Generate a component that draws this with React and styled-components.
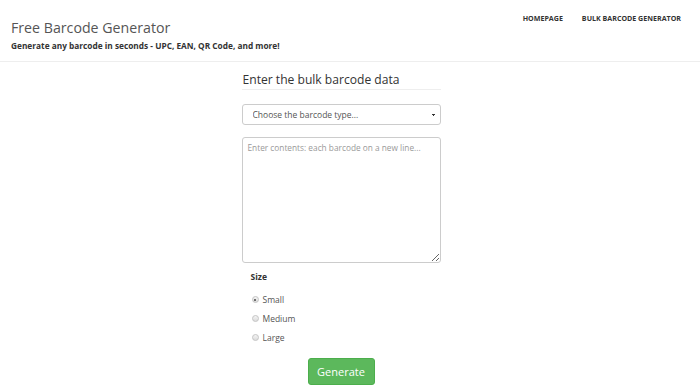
import styled, { createGlobalStyle } from 'styled-components';

const GlobalStyle = createGlobalStyle`
  body {
    margin: 0;
    font-family: "Open Sans", sans-serif;
    background: #fff;
    color: #333;
  }
`;

const App = () => {
  return (
    <>
      <GlobalStyle />
      <Header>
        <Brand>
          <Title>Free Barcode Generator</Title>
          <Tagline>Generate any barcode in seconds - UPC, EAN, QR Code, and more!</Tagline>
        </Brand>
        <Nav>
          <NavLink>HOMEPAGE</NavLink>
          <NavLink>BULK BARCODE GENERATOR</NavLink>
        </Nav>
      </Header>
      <Main>
        <Form>
          <Heading>Enter the bulk barcode data</Heading>
          <Select defaultValue="">
            <option value="" disabled>Choose the barcode type...</option>
          </Select>
          <TextArea placeholder="Enter contents: each barcode on a new line..." />
          <SizeGroup>
            <SizeLabel>Size</SizeLabel>
            <RadioRow>
              <Radio type="radio" name="size" defaultChecked />
              Small
            </RadioRow>
            <RadioRow>
              <Radio type="radio" name="size" />
              Medium
            </RadioRow>
            <RadioRow>
              <Radio type="radio" name="size" />
              Large
            </RadioRow>
          </SizeGroup>
          <ButtonWrap>
            <GenerateButton>Generate</GenerateButton>
          </ButtonWrap>
        </Form>
      </Main>
    </>
  );
};

const Header = styled.header`
  display: flex;
  justify-content: space-between;
  align-items: flex-start;
  height: 62px;
  box-sizing: border-box;
  border-bottom: 1px solid #eee;
  padding: 0 19px 0 11px;
`;

const Brand = styled.div`
  padding-top: 18px;
`;

const Title = styled.div`
  font-size: 14.2px;
  color: #555;
  line-height: 20px;
`;

const Tagline = styled.div`
  font-size: 8.3px;
  font-weight: 700;
  color: #333;
  line-height: 12px;
  margin-top: 2px;
`;

const Nav = styled.nav`
  display: flex;
  gap: 19px;
  padding-top: 12px;
`;

const NavLink = styled.a`
  font-size: 7.1px;
  line-height: 12px;
  font-weight: 700;
  color: #333;
  cursor: pointer;
`;

const Main = styled.main`
  display: flex;
  justify-content: center;
  padding-top: 10px;
`;

const Form = styled.div`
  width: 199px;
  margin-left: -18px;
  display: flex;
  flex-direction: column;
`;

const Heading = styled.h2`
  margin: 0;
  font-size: 12.1px;
  font-weight: 400;
  color: #333;
  line-height: 16px;
  padding: 0 0 1px 1px;
  border-bottom: 1px solid #eee;
`;

const Select = styled.select`
  margin-top: 14px;
  height: 21px;
  border: 1px solid #ccc;
  border-radius: 3px;
  background: #fff;
  font-family: "Open Sans", sans-serif;
  font-size: 8.5px;
  color: #555;
  padding: 0 10px;
  appearance: none;
  background-image: linear-gradient(45deg, transparent 50%, #333 50%), linear-gradient(135deg, #333 50%, transparent 50%);
  background-position: 189px 9px, 191px 9px;
  background-size: 2px 2px, 2px 2px;
  background-repeat: no-repeat;
`;

const TextArea = styled.textarea`
  margin-top: 12px;
  height: 126px;
  box-sizing: border-box;
  border: 1px solid #ccc;
  border-radius: 3px;
  font-family: "Open Sans", sans-serif;
  font-size: 8.3px;
  padding: 4px 5px;
  color: #555;
  resize: vertical;
  &::placeholder {
    color: #999;
  }
`;

const SizeGroup = styled.div`
  padding: 8px 9px 0;
  display: flex;
  flex-direction: column;
`;

const SizeLabel = styled.div`
  font-size: 8.5px;
  line-height: 12px;
  font-weight: 700;
  color: #333;
  margin-bottom: 7px;
`;

const RadioRow = styled.label`
  display: flex;
  align-items: center;
  gap: 4px;
  font-size: 8.5px;
  color: #555;
  height: 19px;
`;

const Radio = styled.input`
  appearance: none;
  margin: 0 0 0 1px;
  width: 7px;
  height: 7px;
  border-radius: 50%;
  border: 1px solid #c4c4c4;
  background: linear-gradient(#f4f4f4, #dcdcdc);
  box-sizing: border-box;
  position: relative;
  &:checked::after {
    content: '';
    position: absolute;
    left: 1.5px;
    top: 1.5px;
    width: 2px;
    height: 2px;
    border-radius: 50%;
    background: #444;
  }
`;

const ButtonWrap = styled.div`
  display: flex;
  justify-content: center;
  margin-top: 11px;
`;

const GenerateButton = styled.button`
  width: 67px;
  height: 27px;
  background: #5cb85c;
  border: 1px solid #4cae4c;
  border-radius: 3px;
  color: #fff;
  font-family: "Open Sans", sans-serif;
  font-size: 11px;
  cursor: pointer;
`;

export default App;
